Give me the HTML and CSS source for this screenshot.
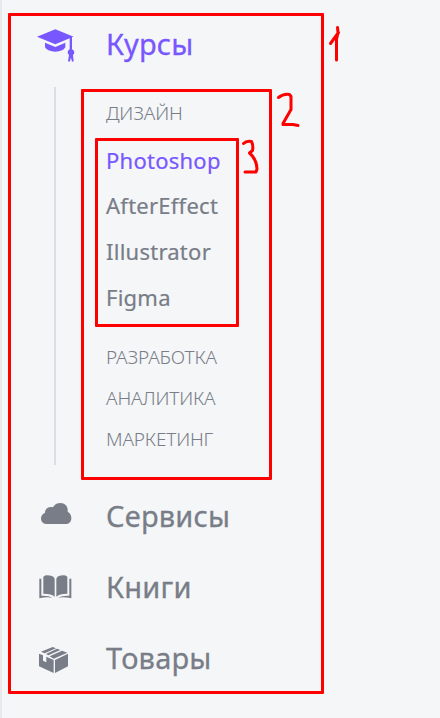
FILE: index.html
```html
<!DOCTYPE html>
<html lang="ru">
<head>
<meta charset="utf-8">
<title>Курсы</title>
<link rel="stylesheet" href="styles.css">
</head>
<body>
<nav class="menu">
  <a class="item item-first active">
    <svg class="icon" viewBox="0 -12 180 168"><path d="M21 50 76 28l55 22-5 2v36q7 3 7 9 0 5-4 8l2 19-5 1-3-12-4 12-5-1 3-19q-4-3-4-8 0-6 6-9V55L76 73Z"/><path d="M45 68l31 13 30-13v14q-8 13-30 13T45 82Z"/></svg>
    <span class="label">Курсы</span>
  </a>
  <div class="branch">
    <div class="rail"></div>
    <div class="categories">
      <div class="category design">ДИЗАЙН</div>
      <div class="programs">
        <a class="program active">Photoshop</a>
        <a class="program">AfterEffect</a>
        <a class="program">Illustrator</a>
        <a class="program">Figma</a>
      </div>
      <div class="category">РАЗРАБОТКА</div>
      <div class="category">АНАЛИТИКА</div>
      <div class="category">МАРКЕТИНГ</div>
    </div>
  </div>
  <a class="item">
    <svg class="icon" viewBox="0 -45 180 213"><path d="M49 87C37 87 33 78 33 70q0-11 12-17c0-13 13-20 24-16 4-9 13-13 22-13 15 0 24 11 22 26 8 4 11 11 11 19 0 10-5 18-17 18Z"/></svg>
    <span class="label">Сервисы</span>
  </a>
  <a class="item">
    <svg class="icon" viewBox="0 -42 180 213"><path d="M40 35q5-4 11-4 18 0 23 10v54q-8-9-34-9ZM112 35q-5-4-11-4-18 0-22 10v54q8-9 33-9ZM28 41h6v51q22-1 34 6-20-3-40 2ZM124 41h-6v51q-22-1-34 6 20-3 40 2Z"/></svg>
    <span class="label">Книги</span>
  </a>
  <a class="item">
    <svg class="icon" viewBox="0 -39 180 213"><path d="M33 50 68 36l10 4-34 15ZM81 41l10 4-36 16-7-4ZM59 64l37-17 16 6-41 18ZM27 56l12 5v16l10 5V65l22 10v39L27 94ZM75 75l39-19v38l-39 20Z"/></svg>
    <span class="label">Товары</span>
  </a>
  <svg class="marks" viewBox="0 0 130 190">
    <path d="M100.500 43.500l8-11M107.500 27.500l.5 5-1.500 7v20.500"/>
    <path d="M48.500 97.500q5-4 11-3l1.500 2v13l-8 14v1h10l5 1"/>
    <path d="M13.500 143.500q3-3 8-2 2 4 1 9l-3 2.500q7 6 7.500 16l-1 3h-11"/>
  </svg>
</nav>
</body>
</html>
```
FILE: styles.css
```css
* { box-sizing: border-box; }
body {
  margin: 0;
  height: 718px;
  padding: 13px 0 0 6px;
  overflow: hidden;
  background: #f4f6f8;
  border-left: 2px solid #e7e9ec;
  font-family: "Noto Sans", "Open Sans", sans-serif;
  color: #787d87;
}
.menu {
  width: 316px;
  height: 681px;
  border: 3px solid #f00;
  border-radius: 1px;
}
.item {
  display: flex;
  align-items: center;
  height: 71px;
  padding-left: 19px;
}
.item-first { height: 56px; }
.icon {
  width: 60px;
  height: 100%;
  flex: none;
  margin-right: 16px;
  fill: currentColor;
}
.label {
  font-size: 29px;
  font-weight: 400;
  line-height: 40px;
  letter-spacing: 0.2px;
  -webkit-text-stroke: 0.3px currentColor;
}
.active { color: #7857ff; }
.branch {
  display: flex;
  height: 408px;
  padding: 15px 0 0 43px;
}
.rail { width: 2px; height: 378px; background: #dddee1; }
.categories {
  width: 191px;
  height: 391px;
  margin: 2px 0 0 25px;
  border: 3px solid #f00;
  border-radius: 1px;
  padding-left: 11px;
}
.category {
  height: 41px;
  padding-left: 11px;
  font-size: 19px;
  font-weight: 300;
  line-height: 42px;
  letter-spacing: -0.15px;
}
.design { margin-bottom: 5px; }
.programs {
  display: flex;
  flex-direction: column;
  gap: 7.600px;
  width: 144px;
  height: 189px;
  margin-bottom: 9px;
  padding-left: 8px;
  border: 3px solid #f00;
  border-radius: 1px;
}
.program {
  height: 38px;
  font-size: 22px;
  font-weight: 400;
  line-height: 38px;
  letter-spacing: 0.25px;
  -webkit-text-stroke: 0.2px currentColor;
}
.program:first-child { margin-top: -0.2px; }
.marks {
  position: absolute;
  top: 0;
  left: 230px;
  width: 130px;
  height: 190px;
  fill: none;
  stroke: #f00;
  stroke-width: 3;
  stroke-linecap: round;
  stroke-linejoin: round;
}
```
